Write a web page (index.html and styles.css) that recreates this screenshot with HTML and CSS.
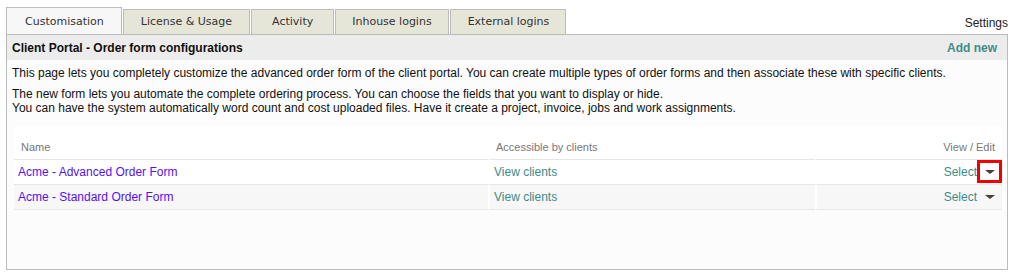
FILE: index.html
```html
<!DOCTYPE html>
<html>
<head>
<meta charset="utf-8">
<link rel="stylesheet" href="styles.css">
</head>
<body>
<div class="page">
  <div class="tabbar">
    <ul class="tabs">
      <li class="tab active">Customisation</li>
      <li class="tab">License &amp; Usage</li>
      <li class="tab">Activity</li>
      <li class="tab">Inhouse logins</li>
      <li class="tab">External logins</li>
    </ul>
    <div class="settings">Settings</div>
  </div>
  <div class="panel">
    <div class="panel-head">
      <span class="title">Client Portal - Order form configurations</span>
      <a class="add">Add new</a>
    </div>
    <div class="panel-body">
      <p class="intro">This page lets you completely customize the advanced order form of the client portal. You can create multiple types of order forms and then associate these with specific clients.</p>
      <p class="intro">The new form lets you automate the complete ordering process. You can choose the fields that you want to display or hide.<br>You can have the system automatically word count and cost uploaded files. Have it create a project, invoice, jobs and work assignments.</p>
      <table class="forms">
        <colgroup>
          <col class="c1"><col class="c2"><col class="c3">
        </colgroup>
        <thead>
          <tr><th>Name</th><th>Accessible by clients</th><th class="right">View / Edit</th></tr>
        </thead>
        <tbody>
          <tr>
            <td><a class="name">Acme - Advanced Order Form</a></td>
            <td><a class="teal">View clients</a></td>
            <td class="right"><a class="teal">Select</a><span class="caret highlight"><span class="tri"></span></span></td>
          </tr>
          <tr class="alt">
            <td><a class="name">Acme - Standard Order Form</a></td>
            <td><a class="teal">View clients</a></td>
            <td class="right"><a class="teal">Select</a><span class="caret"><span class="tri"></span></span></td>
          </tr>
        </tbody>
      </table>
    </div>
  </div>
</div>
</body>
</html>
```
FILE: styles.css
```css
html, body {
  margin: 0;
  padding: 0;
  background: #ffffff;
}
body {
  font-family: "Liberation Sans", Arial, sans-serif;
  font-size: 12px;
  color: #111;
}
.page {
  padding: 7px 6px 0 6px;
}
.tabbar {
  display: flex;
  align-items: flex-end;
  height: 27px;
}
.tabs {
  display: flex;
  align-items: flex-end;
  list-style: none;
  margin: 0;
  padding: 0;
}
.tab {
  font-family: "DejaVu Sans", Verdana, sans-serif;
  font-size: 11px;
  color: #333;
  background: #e6e6d8;
  border: 1px solid #bdbdbd;
  border-bottom: none;
  height: 24px;
  line-height: 24px;
  padding: 0 17px;
  margin-right: 1px;
}
.tab:nth-child(1) { padding: 0 17px 0 18px; }
.tab:nth-child(2) { padding: 0 17px; }
.tab:nth-child(3) { padding: 0 20px; }
.tab:nth-child(4) { padding: 0 16px; }
.tab:nth-child(5) { padding: 0 16px 0 17px; }
.tab.active {
  background: #f7f7f7;
  height: 26px;
  line-height: 28px;
}
.settings {
  margin-left: auto;
  color: #222;
  font-size: 12px;
  line-height: 14px;
  padding-bottom: 4px;
  padding-right: 0;
}
.panel {
  border: 1px solid #bbbbbb;
  height: 234px;
  background: #fcfcfc;
}
.panel-head {
  display: flex;
  justify-content: space-between;
  align-items: center;
  height: 25px;
  background: #ececec;
  padding: 0 10px 0 5px;
}
.title {
  font-weight: bold;
  font-size: 12px;
  color: #111;
}
.add {
  font-weight: bold;
  color: #3f8c88;
  font-size: 12px;
}
.panel-body {
  padding: 6px 6px 0 5px;
}
.intro {
  margin: 0 0 7px 0;
  line-height: 14px;
  font-size: 12px;
  color: #111;
}
.forms {
  margin: 11px 0 0 2px;
  width: 988px;
  table-layout: fixed;
  border-collapse: separate;
  border-spacing: 0;
  background: #ffffff;
}
.c1 { width: 474px; }
.c2 { width: 327px; }
.c3 { width: 187px; }
.forms th {
  font-weight: normal;
  color: #777;
  font-size: 11px;
  text-align: left;
  height: 27px;
  vertical-align: bottom;
  padding: 0 6px 6px 7px;
  border-bottom: 1px solid #e6e6e6;
}
.forms th:nth-child(2) { padding-left: 6px; border-left: 2px solid #fff; }
.forms th.right { text-align: right; padding-right: 7px; border-left: 2px solid #fff; }
.forms td {
  height: 24px;
  padding: 0 0 0 4px;
  border-bottom: 1px solid #e6e6e6;
  vertical-align: middle;
}
.forms td + td { border-left: 2px solid #fff; }
.forms tr.alt td { background: #f7f7f7; }
.forms td.right {
  text-align: right;
  padding-right: 0;
}
.name {
  color: #5511ee;
  font-size: 12px;
}
.teal {
  color: #3c8c8a;
  font-size: 12px;
}
.caret {
  display: inline-block;
  width: 19px;
  height: 17px;
  border: 3px solid transparent;
  vertical-align: middle;
  position: relative;
  top: -1px;
  background: transparent;
}
.caret.highlight {
  border-color: #f00000;
  background: #ffffff;
}
.tri {
  display: block;
  width: 0;
  height: 0;
  margin: 7px auto 0 auto;
  border-left: 5px solid transparent;
  border-right: 5px solid transparent;
  border-top: 4px solid #4a4038;
}
```
